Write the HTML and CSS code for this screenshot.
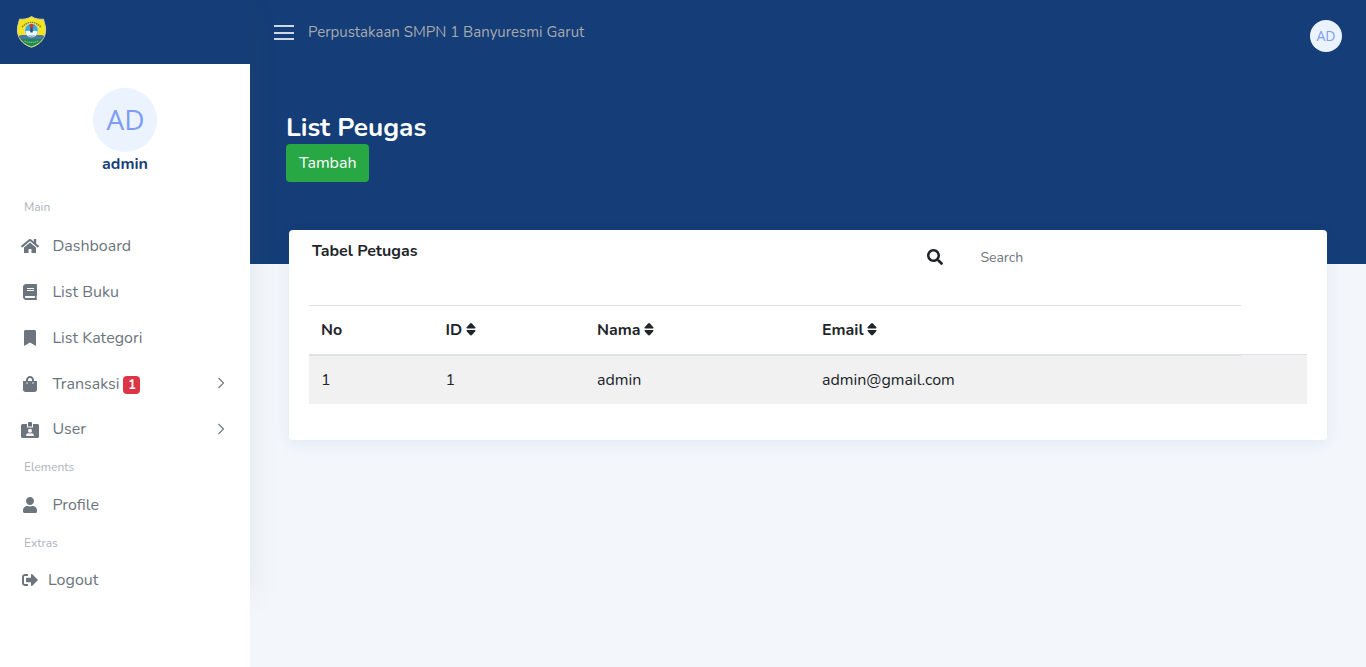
FILE: index.html
```
<!DOCTYPE html>
<html lang="id">
<head>
<meta charset="utf-8">
<title>List Petugas</title>
<link rel="stylesheet" href="styles.css">
</head>
<body>
<div class="app">
  <aside class="sidebar">
    <div class="brand">
      <svg class="logo" viewBox="0 0 30 32">
        <path d="M15 .5C18 3 24 3.500 27 3.200c.3 3 1.700 5 2 8C30 21 25 28 15 31.300 5 28 0 21 1 11.200c.3-3 1.700-5 2-8C6 3.500 12 3 15 .5z" fill="#f3e51c" stroke="#d8cfa8" stroke-width="1"/>
        <path d="M2.300 20c3-1 6-1 9-.5h7c3-.5 6-.5 9.400.5C25.500 25 21 28.500 15 30.600 9 28.500 4.500 25 2.300 20z" fill="#17895a"/>
        <path d="M2.300 20c4-2 8-.5 12.700-1 5 .5 9-1 12.700 1l-1.200 3H3.500z" fill="#4d76a8"/>
        <path d="M5.500 11Q15 2 24.500 11" fill="none" stroke="#8b8422" stroke-width="1.600" stroke-dasharray="1.500 .7"/>
        <circle cx="15" cy="14.200" r="6.800" fill="#39a8e0" stroke="#e9e8c2" stroke-width=".8"/>
        <path d="M9 15.500c2-1 4.500-.8 6 .5 1.500-1.300 4-1.500 6-.5l-1.500 4h-9z" fill="#f4fbff"/>
        <path d="M13.800 10.500h2.400v6h-2.400z" fill="#3b4b59"/>
        <circle cx="15" cy="9.800" r="2.100" fill="#d8392f"/>
        <path d="M8 25q7 2.800 14 0" fill="none" stroke="#8fc255" stroke-width="1.100" stroke-dasharray="1.500 .6"/>
      </svg>
    </div>
    <div class="profile">
      <div class="avatar avatar-lg">AD</div>
      <div class="profile-name">admin</div>
    </div>
    <nav class="menu">
      <div class="menu-title first">Main</div>
      <a class="item"><span class="icon"><svg width="18" height="16" viewBox="0 0 576 512"><path d="M280.370 148.260L96 300.110V464a16 16 0 0 0 16 16l112.060-.29a16 16 0 0 0 15.920-16V368a16 16 0 0 1 16-16h64a16 16 0 0 1 16 16v95.640a16 16 0 0 0 16 16.050L464 480a16 16 0 0 0 16-16V300L295.670 148.260a12.190 12.190 0 0 0-15.300 0zM571.600 251.470L488 182.560V44.050a12 12 0 0 0-12-12h-56a12 12 0 0 0-12 12v72.610L318.470 43a48 48 0 0 0-61 0L4.340 251.470a12 12 0 0 0-1.600 16.900l25.500 31A12 12 0 0 0 45.150 301l235.220-193.740a12.190 12.190 0 0 1 15.300 0L530.900 301a12 12 0 0 0 16.900-1.600l25.500-31a12 12 0 0 0-1.700-16.930z"/></svg></span>Dashboard</a>
      <a class="item"><span class="icon"><svg width="14" height="16" viewBox="0 0 448 512"><path d="M448 360V24c0-13.300-10.700-24-24-24H96C43 0 0 43 0 96v320c0 53 43 96 96 96h328c13.300 0 24-10.700 24-24v-16c0-7.500-3.500-14.300-8.900-18.700-4.200-15.400-4.200-59.300 0-74.700 5.400-4.300 8.900-11.100 8.900-18.600zM128 134c0-3.300 2.700-6 6-6h212c3.300 0 6 2.700 6 6v20c0 3.300-2.700 6-6 6H134c-3.300 0-6-2.700-6-6v-20zm0 64c0-3.300 2.700-6 6-6h212c3.300 0 6 2.700 6 6v20c0 3.300-2.700 6-6 6H134c-3.300 0-6-2.700-6-6v-20zm253.400 250H96c-17.700 0-32-14.300-32-32 0-17.600 14.400-32 32-32h285.400c-1.900 17.100-1.900 46.900 0 64z"/></svg></span>List Buku</a>
      <a class="item"><span class="icon"><svg width="12" height="16" viewBox="0 0 384 512"><path d="M0 512V48C0 21.490 21.490 0 48 0h288c26.510 0 48 21.490 48 48v464L192 400 0 512z"/></svg></span>List Kategori</a>
      <a class="item"><span class="icon"><svg width="14" height="16" viewBox="0 0 448 512"><path d="M352 160v-32C352 57.420 294.579 0 224 0 153.420 0 96 57.420 96 128v32H0v272c0 44.183 35.817 80 80 80h288c44.183 0 80-35.817 80-80V160h-96zm-192-32c0-35.290 28.710-64 64-64s64 28.710 64 64v32H160v-32zm160 120c-13.255 0-24-10.745-24-24s10.745-24 24-24 24 10.745 24 24-10.745 24-24 24zm-192 0c-13.255 0-24-10.745-24-24s10.745-24 24-24 24 10.745 24 24-10.745 24-24 24z"/></svg></span>Transaksi<span class="badge">1</span><svg class="chevron" viewBox="0 0 8 12"><path d="M1.500 1L6.500 6l-5 5"/></svg></a>
      <a class="item user-item"><span class="icon"><svg width="18" height="16" viewBox="0 0 18 16" fill-rule="evenodd"><path d="M1.500 2H6v3.500h6V2h4.500A1.500 1.500 0 0 1 18 3.500v11a1.500 1.500 0 0 1-1.500 1.500h-15A1.500 1.500 0 0 1 0 14.500v-11A1.500 1.500 0 0 1 1.500 2zM9 6.700a2 2 0 1 0 0 4 2 2 0 0 0 0-4zM7.300 11.200C6 11.200 5.200 12 5.200 13.200V14h7.600v-.8c0-1.200-.8-2-2.100-2-1 .4-2.400.4-3.400 0z"/><path d="M8 0h2a1 1 0 0 1 1 1v3.500H7V1a1 1 0 0 1 1-1z"/></svg></span>User<svg class="chevron" viewBox="0 0 8 12"><path d="M1.500 1L6.500 6l-5 5"/></svg></a>
      <div class="menu-title">Elements</div>
      <a class="item"><span class="icon"><svg width="14" height="16" viewBox="0 0 448 512"><path d="M224 256c70.700 0 128-57.300 128-128S294.700 0 224 0 96 57.300 96 128s57.300 128 128 128zm89.600 32h-16.700c-22.200 10.200-46.900 16-72.900 16s-50.600-5.800-72.900-16h-16.700C60.200 288 0 348.200 0 422.400V464c0 26.500 21.500 48 48 48h352c26.500 0 48-21.500 48-48v-41.600c0-74.200-60.200-134.400-134.400-134.400z"/></svg></span>Profile</a>
      <div class="menu-title">Extras</div>
      <a class="item logout"><span class="icon"><svg width="16" height="16" viewBox="0 0 512 512"><path d="M497 273L329 441c-15 15-41 4.500-41-17v-96H152c-13.300 0-24-10.700-24-24v-96c0-13.300 10.700-24 24-24h136V88c0-21.400 25.900-32 41-17l168 168c9.300 9.400 9.300 24.600 0 34zM192 436v-40c0-6.600-5.400-12-12-12H96c-17.700 0-32-14.300-32-32V160c0-17.700 14.300-32 32-32h84c6.600 0 12-5.400 12-12V76c0-6.600-5.400-12-12-12H96c-53 0-96 43-96 96v192c0 53 43 96 96 96h84c6.600 0 12-5.400 12-12z"/></svg></span>Logout</a>
    </nav>
  </aside>
  <main class="main">
    <div class="hero">
      <header class="topbar">
        <button class="burger" aria-label="Menu"><span></span><span></span><span></span></button>
        <span class="site">Perpustakaan SMPN 1 Banyuresmi Garut</span>
        <div class="avatar avatar-sm">AD</div>
      </header>
      <div class="heading">
        <h1>List Peugas</h1>
        <button class="btn">Tambah</button>
      </div>
    </div>
    <section class="card">
      <div class="card-head">
        <h2>Tabel Petugas</h2>
        <svg class="search-icon" viewBox="0 0 512 512"><path d="M505 442.700L405.300 343c-4.500-4.500-10.600-7-17-7H372c27.600-35.300 44-79.700 44-128C416 93.100 322.900 0 208 0S0 93.100 0 208s93.100 208 208 208c48.300 0 92.700-16.400 128-44v16.300c0 6.400 2.500 12.500 7 17l99.700 99.700c9.400 9.400 24.600 9.400 33.900 0l28.300-28.300c9.400-9.400 9.400-24.600.1-34zM208 336c-70.700 0-128-57.200-128-128 0-70.700 57.200-128 128-128 70.700 0 128 57.200 128 128 0 70.700-57.200 128-128 128z"/></svg>
        <input class="search" type="text" placeholder="Search">
      </div>
      <div class="table">
        <div class="row head">
          <span>No</span>
          <span>ID <svg class="sort" viewBox="0 0 10 13"><path d="M5 0q.6 0 1 .5l3.500 4q.8 1.200-.6 1.200H1.100q-1.400 0-.6-1.200L4 .5Q4.400 0 5 0zM5 13q.6 0 1-.5l3.500-4q.8-1.200-.6-1.200H1.100q-1.400 0-.6 1.200l3.500 4q.4.500 1 .5z"/></svg></span>
          <span>Nama <svg class="sort" viewBox="0 0 10 13"><path d="M5 0q.6 0 1 .5l3.500 4q.8 1.200-.6 1.200H1.100q-1.400 0-.6-1.200L4 .5Q4.400 0 5 0zM5 13q.6 0 1-.5l3.500-4q.8-1.200-.6-1.200H1.100q-1.400 0-.6 1.200l3.500 4q.4.500 1 .5z"/></svg></span>
          <span>Email <svg class="sort" viewBox="0 0 10 13"><path d="M5 0q.6 0 1 .5l3.500 4q.8 1.200-.6 1.200H1.100q-1.400 0-.6-1.200L4 .5Q4.400 0 5 0zM5 13q.6 0 1-.5l3.500-4q.8-1.200-.6-1.200H1.100q-1.400 0-.6 1.200l3.500 4q.4.500 1 .5z"/></svg></span>
        </div>
        <div class="row body"><span>1</span><span>1</span><span>admin</span><span>admin@gmail.com</span></div>
      </div>
    </section>
  </main>
</div>
</body>
</html>
```
FILE: styles.css
```
* { box-sizing: border-box; }
body { margin: 0; font: 400 16px/24px Nunito, "Open Sans", sans-serif; color: #212529; background: #f3f7fc; }
.app { display: flex; height: 667px; overflow: hidden; position: relative; }
.app::before { content: ""; position: absolute; z-index: 1; top: 8px; left: 0; width: 250px; height: 588px; box-shadow: 0 0 28px rgba(82, 85, 92, .1); pointer-events: none; }

.sidebar { width: 250px; flex: none; background: #fff; position: relative; z-index: 2; }
.brand { height: 64px; padding: 16px 0 0 16px; background: #153d77; }
.logo { display: block; width: 31px; height: 32px; }
.profile { display: flex; flex-direction: column; align-items: center; padding-top: 24px; }
.avatar { display: flex; align-items: center; justify-content: center; border-radius: 50%; background: #ebf3ff; color: #7f9cf5; font-family: "Open Sans", "Noto Sans", sans-serif; }
.avatar-lg { width: 64px; height: 64px; padding: 0 0 2px 1px; font-size: 28px; }
.avatar-sm { width: 32px; height: 32px; margin: 8px 24px 0 auto; font-size: 14px; }
.profile-name { font-weight: 700; color: #153d77; }
.menu { padding-top: 16px; }
.menu-title { padding-left: 24px; height: 30px; line-height: 30px; font-size: 12px; color: #adb5bd; }
.menu-title.first { height: 31px; }
.item { display: flex; align-items: center; height: 46px; padding-left: 21px; color: #6c757d; }
.item .icon { display: flex; justify-content: center; width: 18px; margin-right: 13.4px; }
.icon svg { fill: #6c757d; }
.user-item { height: 45px; line-height: 22px; padding-bottom: 1px; }
.user-item .icon { margin-top: 1px; }
.logout { height: 44px; }
.logout .icon { margin-right: 9px; }
.badge { margin: 2px 0 0 4px; width: 17px; text-align: center; height: 18px; border-radius: 4px; background: #dc3545; color: #fff; font-size: 12.8px; font-weight: 700; line-height: 18px; }
.chevron { width: 8px; height: 12px; margin: -2px 25px 0 auto; fill: none; stroke: #6c757d; stroke-width: 1.1; }
.user-item .chevron { margin-top: 0; }

.main { flex: 1; min-width: 0; }
.hero { height: 264px; background: #153d77; }
.topbar { display: flex; align-items: center; height: 64px; padding-left: 24px; }
.burger { display: flex; flex-direction: column; justify-content: space-between; width: 20px; height: 15px; margin: 1px 14px 0 0; padding: 0; border: 0; background: none; }
.burger span { height: 2px; background: #d0d8e4; }
.site { font-size: 15px; color: #a5a9ae; }
.heading { display: flex; flex-direction: column; align-items: flex-start; padding: 47px 0 0 36px; }
h1 { margin: 0; font-size: 26.25px; line-height: 33px; font-weight: 700; color: #fff; }
.btn { height: 38px; padding: 0 13px; border: 0; border-radius: 4px; background: #28a745; color: #fff; font: inherit; }

.card { width: 1038px; height: 210px; margin: -34px 0 0 39px; padding: 0 20px; position: relative; z-index: 2; border-radius: 4px; background: #fff; box-shadow: 0 4px 16px rgba(21, 61, 119, .07); }
.card-head { display: flex; height: 75px; padding: 9px 0 0 3px; }
h2 { width: 615px; margin: 0; font-size: 16px; line-height: 24px; font-weight: 700; }
.search-icon { width: 16px; height: 16px; margin-top: 10px; fill: #212529; }
.search { width: 260px; height: 38px; margin: -1px 0 0 24.4px; padding: 0 13px; border: 0; background: none; font: 14px Nunito, sans-serif; }
.search::placeholder { color: #6c757d; opacity: 1; }
.row { display: grid; grid-template-columns: 124.5px 151.5px 225px 1fr; align-items: center; padding-left: 12px; }
.head { width: 932px; height: 49px; border-top: 1px solid #dee2e6; font-weight: 700; }
.sort { width: 10px; height: 12.5px; fill: #212529; vertical-align: -.5px; margin-left: -.5px; }
.body { height: 50px; border-top: 1px solid #dee2e6; background: linear-gradient(#dee2e6, #dee2e6) 0 0 / 932px 1px no-repeat #f1f1f1; }
```
